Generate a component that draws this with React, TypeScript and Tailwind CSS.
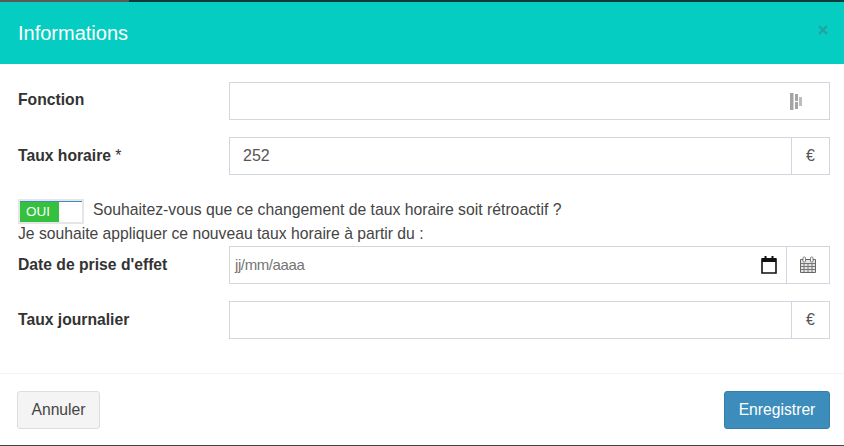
import React from "react";

const font = { fontFamily: '"Liberation Sans", Arial, sans-serif' };

function Euro() {
  return (
    <div className="flex w-[38px] items-center justify-center border-l border-[#d2d6de] text-[16px] text-[#555]">
      €
    </div>
  );
}

function Row({ label, star, first, className, children }: { label: string; star?: boolean; first?: boolean; className: string; children: React.ReactNode }) {
  return (
    <div className={`flex h-[38px] ${className}`}>
      <label className="w-[211px] text-[15.7px] font-bold text-[#333]">
        <span className={first ? "block pt-[8px] leading-[20px]" : "block pt-[9px] leading-[20px]"}>
          {label}
          {star ? <span className="font-normal"> *</span> : null}
        </span>
      </label>
      <div className="flex h-[38px] w-[601px] border border-[#d2d6de] bg-white">{children}</div>
    </div>
  );
}

export default function App() {
  return (
    <div className="flex h-[446px] w-[844px] flex-col overflow-hidden bg-white" style={font}>
      <div className="flex h-[2px] shrink-0">
        <div className="w-[129px] bg-[#5a5a5a]" />
        <div className="flex-1 bg-[#0d3b3a]" />
      </div>
      <header className="flex h-[62px] shrink-0 items-center justify-between bg-[#06cdc1] pl-[18px] pr-[15px]">
        <h4 className="text-[20px] leading-[22px] text-white">Informations</h4>
        <svg width="12" height="12" viewBox="0 0 12 12" className="mb-[6px]">
          <path d="M2 2l8 8M10 2l-8 8" stroke="#1fa59c" strokeWidth="2.4" fill="none" />
        </svg>
      </header>
      <main className="flex flex-1 flex-col border-b border-[#f4f4f4] pl-[18px] pt-[18px]">
        <Row label="Fonction" first className="">
          <div className="flex flex-1 items-center justify-end pr-[27px]">
            <svg width="12" height="17" viewBox="0 0 12 17">
              <rect x="0" y="0" width="3.5" height="17" fill="#a4a4a4" />
              <rect x="5" y="1" width="3" height="7" fill="#a4a4a4" />
              <rect x="5" y="9" width="3" height="7" fill="#a4a4a4" />
              <rect x="9" y="4" width="3" height="9" fill="#bdbdbd" />
            </svg>
          </div>
        </Row>
        <Row label="Taux horaire" star className="mt-[17px]">
          <div className="flex flex-1 items-center px-[13px] text-[16px] text-[#555]">252</div>
          <Euro />
        </Row>
        <div className="mt-[24px] flex h-[25px] items-start">
          <div className="h-[25px] w-[66px] border-2 border-[#e6e6e6] bg-white">
            <div className="h-[21px] border-t border-[#3c8dbc]">
              <div className="flex h-[20px] w-[39px] items-center bg-[#35c13f] pl-[6px] text-[13.5px] leading-none text-white">OUI</div>
            </div>
          </div>
          <span className="ml-[9px] pt-[1px] text-[15.75px] leading-[20px] text-[#444]">
            Souhaitez-vous que ce changement de taux horaire soit rétroactif ?
          </span>
        </div>
        <div className="h-[22px] text-[15.7px] leading-[20px] text-[#444]">
          Je souhaite appliquer ce nouveau taux horaire à partir du :
        </div>
        <Row label="Date de prise d'effet" className="">
          <div className="flex flex-1 items-center justify-between pl-[5px] pr-[9px] text-[15px] tracking-[-0.4px] text-[#757575]">
            <span>jj/mm/aaaa</span>
            <svg width="16" height="18" viewBox="0 0 16 18">
              <path d="M1 3h14v14H1z" fill="none" stroke="#111" strokeWidth="1.6" />
              <rect x="1" y="2" width="14" height="4" fill="#111" />
              <rect x="3.5" y="0" width="2" height="3" fill="#111" />
              <rect x="10.5" y="0" width="2" height="3" fill="#111" />
            </svg>
          </div>
          <div className="flex w-[43px] items-center justify-center border-l border-[#d2d6de]">
            <svg width="16" height="17" viewBox="0 0 16 17" className="mb-[2px]">
              <path d="M.5 3.5h15v13H.5z" fill="#e4e4e4" stroke="#666" />
              <path d="M.5 7.5h15M.5 10.5h15M.5 13.5h15M4 7v9M8 7v9M12 7v9" stroke="#777" strokeWidth="1" />
              <rect x="3" y="1" width="2.5" height="5" rx="1" fill="#fff" stroke="#666" strokeWidth=".8" />
              <rect x="10.5" y="1" width="2.5" height="5" rx="1" fill="#fff" stroke="#666" strokeWidth=".8" />
            </svg>
          </div>
        </Row>
        <Row label="Taux journalier" className="mt-[17px]">
          <div className="flex-1" />
          <Euro />
        </Row>
      </main>
      <footer className="flex h-[72px] shrink-0 items-start justify-between border-b border-[#444] pl-[17px] pr-[14px] pt-[17px]">
        <button className="h-[38px] w-[83px] rounded-[3px] border border-[#ddd] bg-[#f4f4f4] text-[15.7px] text-[#444]">
          Annuler
        </button>
        <button className="h-[38px] w-[106px] rounded-[3px] border border-[#367fa9] bg-[#3c8dbc] text-[15.7px] text-white">
          Enregistrer
        </button>
      </footer>
    </div>
  );
}
